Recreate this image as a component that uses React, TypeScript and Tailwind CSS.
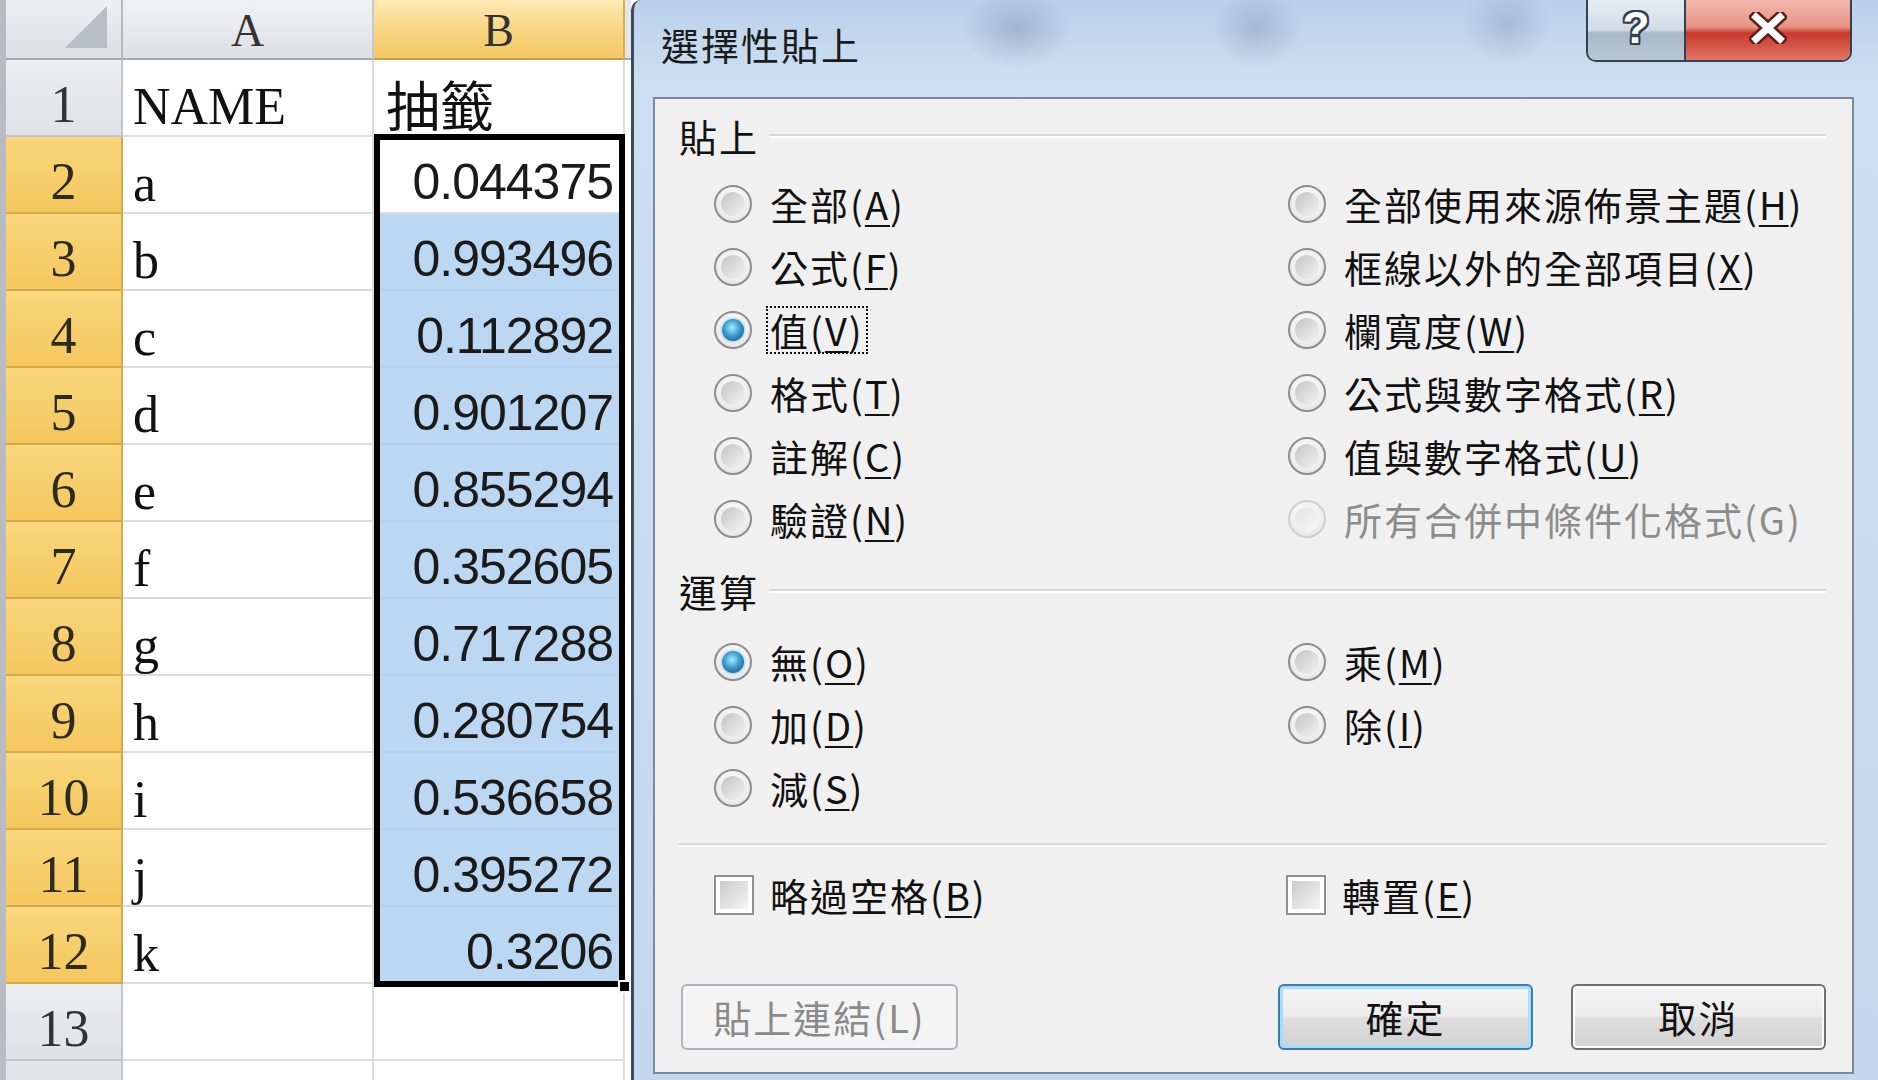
import React from "react";

const names = ["a", "b", "c", "d", "e", "f", "g", "h", "i", "j", "k"];
const values = [
  "0.044375",
  "0.993496",
  "0.112892",
  "0.901207",
  "0.855294",
  "0.352605",
  "0.717288",
  "0.280754",
  "0.536658",
  "0.395272",
  "0.3206",
];

const serif = "font-['Liberation_Serif','Noto_Sans_CJK_TC',serif]";
const cjk = "font-['Noto_Sans_CJK_TC',sans-serif]";

function RowHead({ n, active }: { n: number; active: boolean }) {
  return (
    <div
      className={`flex h-[77px] shrink-0 items-end justify-center border-r-2 border-b-2 pb-[4px] text-[52px] leading-none ${serif} ${
        active
          ? "border-[#d6a94a] bg-[linear-gradient(to_bottom,#f9d77c,#f4c75d)] text-[#2e2a20]"
          : "border-[#c3c7cd] bg-[linear-gradient(to_bottom,#eceef0,#dfe2e6)] text-[#333]"
      }`}
    >
      {n}
    </div>
  );
}

function Sheet() {
  return (
    <div className="flex h-[1080px] w-[631px] shrink-0 overflow-hidden border-l-[6px] border-[#b8bcc2] bg-white">
      {/* row headers */}
      <div className="flex w-[117px] shrink-0 flex-col">
        <div className="flex h-[60px] shrink-0 items-end justify-end border-r-2 border-b-2 border-r-[#b4b9c0] border-b-[#a4a9b0] bg-[linear-gradient(to_bottom,#eef0f2,#dcdfe3)] pr-[14px] pb-[10px]">
          <svg width="42" height="42" viewBox="0 0 42 42">
            <path d="M42 0 L42 42 L0 42 Z" fill="#b9bec5" />
          </svg>
        </div>
        <RowHead n={1} active={false} />
        {names.map((_, i) => (
          <RowHead key={i} n={i + 2} active={true} />
        ))}
        <RowHead n={13} active={false} />
        <div className="flex-1 border-r-2 border-[#c3c7cd] bg-[#e2e5e8]" />
      </div>

      {/* column A */}
      <div className="flex w-[251px] shrink-0 flex-col">
        <div className={`flex h-[60px] shrink-0 items-center justify-center border-r-2 border-b-2 border-r-[#c6cad0] border-b-[#a4a9b0] bg-[linear-gradient(to_bottom,#f1f2f4,#dde0e4)] pt-[4px] text-[46px] leading-none text-[#333] ${serif}`}>
          A
        </div>
        <div className={`flex h-[77px] shrink-0 items-end border-r-2 border-b-2 border-[#dadcdf] pb-[2px] pl-[10px] text-[52px] leading-none text-[#111] ${serif}`}>
          NAME
        </div>
        {names.map((n) => (
          <div
            key={n}
            className={`flex h-[77px] shrink-0 items-end border-r-2 border-b-2 border-[#dadcdf] pb-[2px] pl-[10px] text-[52px] leading-none text-[#111] ${serif}`}
          >
            {n}
          </div>
        ))}
        <div className="h-[77px] shrink-0 border-r-2 border-b-2 border-[#dadcdf]" />
        <div className="flex-1 border-r-2 border-[#dadcdf]" />
      </div>

      {/* column B */}
      <div className="flex w-[251px] shrink-0 flex-col">
        <div className={`flex h-[60px] shrink-0 items-center justify-center border-r-2 border-b-2 border-r-[#d9ad52] border-b-[#c9a048] bg-[linear-gradient(to_bottom,#fde9b4,#f9d889_45%,#f5c862)] pt-[4px] text-[46px] leading-none text-[#333] ${serif}`}>
          B
        </div>
        <div className={`flex h-[77px] shrink-0 items-end border-r-2 border-b-2 border-[#dadcdf] pb-[4px] pl-[12px] text-[54px] leading-none text-[#111] ${cjk}`}>
          抽籤
        </div>
        <div className="relative flex shrink-0 flex-col">
          {values.map((v, i) => (
            <div
              key={v}
              className={`flex h-[77px] shrink-0 items-end justify-end border-b-2 pr-[12px] pb-[5px] font-['Liberation_Sans',sans-serif] text-[50px] leading-none tracking-[-1px] text-[#1a1a1a] ${
                i === 0 ? "border-[#dadcdf] bg-white" : "border-[#b4d0ee] bg-[#bcd7f2]"
              }`}
            >
              {v}
            </div>
          ))}
          <div className="pointer-events-none absolute -top-[3px] -bottom-[3px] left-0 right-0 border-[6px] border-black" />
          <div className="pointer-events-none absolute -right-[6px] -bottom-[9px] h-[13px] w-[13px] border-2 border-white bg-black" />
        </div>
        <div className="h-[77px] shrink-0 border-r-2 border-b-2 border-[#dadcdf]" />
        <div className="flex-1 border-r-2 border-[#dadcdf]" />
      </div>

      {/* sliver of column C */}
      <div className="flex flex-1 flex-col">
        <div className="h-[60px] shrink-0 border-b-2 border-[#a4a9b0] bg-[#e4e6e9]" />
        <div className="flex-1 bg-white" />
      </div>
    </div>
  );
}

function Radio({ checked, disabled }: { checked?: boolean; disabled?: boolean }) {
  return (
    <span
      className={`flex h-[38px] w-[38px] shrink-0 items-center justify-center rounded-full border-2 bg-[radial-gradient(circle_at_50%_40%,#ffffff,#eeeeee_60%,#d8d8d8)] ${
        disabled ? "border-[#cfd0d1]" : "border-[#8d8e90]"
      }`}
    >
      {checked ? (
        <span className="h-[22px] w-[22px] rounded-full bg-[radial-gradient(circle_at_45%_40%,#a8ecff,#3a9ccf_45%,#0e4a6e)] shadow-[0_0_3px_#5aa8d8]" />
      ) : (
        <span
          className={`h-[24px] w-[24px] rounded-full ${
            disabled
              ? "bg-[linear-gradient(135deg,#e4e4e4,#f7f7f7)]"
              : "bg-[linear-gradient(135deg,#c4c4c4,#f3f3f3)]"
          }`}
        />
      )}
    </span>
  );
}

function Key({ k }: { k: string }) {
  return (
    <>
      (<span className="underline decoration-2 underline-offset-[5px]">{k}</span>)
    </>
  );
}

type Opt = { t: string; k: string; checked?: boolean; focus?: boolean; disabled?: boolean } | null;

function Option({ o }: { o: Opt }) {
  if (!o) return <div className="h-[63px]" />;
  return (
    <div className="flex h-[63px] items-center gap-[18px]">
      <Radio checked={o.checked} disabled={o.disabled} />
      <span
        className={`whitespace-nowrap ${o.disabled ? "text-[#8c8c8c]" : "text-[#111]"} ${
          o.focus ? "-ml-[4px] border-2 border-dotted border-[#111] px-[2px] py-[3px]" : ""
        }`}
      >
        {o.t}
        {o.disabled ? `(${o.k})` : <Key k={o.k} />}
      </span>
    </div>
  );
}

function GroupHead({ label }: { label: string }) {
  return (
    <div className="flex h-[44px] shrink-0 items-center">
      <span className="text-[#111]">{label}</span>
      <div className="ml-[10px] h-0 flex-1 border-t-2 border-b-2 border-t-[#d9d9d9] border-b-white" />
    </div>
  );
}

function Checkbox() {
  return (
    <span className="flex h-[40px] w-[40px] shrink-0 items-center justify-center border-2 border-[#8e8f8f] bg-white">
      <span className="h-[28px] w-[28px] bg-[linear-gradient(135deg,#cbcbcb,#f5f5f5)]" />
    </span>
  );
}

const pasteOpts: Opt[] = [
  { t: "全部", k: "A" },
  { t: "全部使用來源佈景主題", k: "H" },
  { t: "公式", k: "F" },
  { t: "框線以外的全部項目", k: "X" },
  { t: "值", k: "V", checked: true, focus: true },
  { t: "欄寬度", k: "W" },
  { t: "格式", k: "T" },
  { t: "公式與數字格式", k: "R" },
  { t: "註解", k: "C" },
  { t: "值與數字格式", k: "U" },
  { t: "驗證", k: "N" },
  { t: "所有合併中條件化格式", k: "G", disabled: true },
];

const opOpts: Opt[] = [
  { t: "無", k: "O", checked: true },
  { t: "乘", k: "M" },
  { t: "加", k: "D" },
  { t: "除", k: "I" },
  { t: "減", k: "S" },
  null,
];

const btnFace =
  "bg-[linear-gradient(to_bottom,#f4f4f4,#ececec_48%,#dedede_52%,#d2d2d2)]";

function Dialog() {
  return (
    <div
      className={`flex h-[1080px] flex-1 flex-col rounded-tl-[10px] border-l-[3px] border-[#3d4b5c] bg-[radial-gradient(ellipse_55px_40px_at_383px_28px,rgba(80,100,130,0.28),transparent),radial-gradient(ellipse_45px_40px_at_623px_28px,rgba(80,100,130,0.25),transparent),radial-gradient(ellipse_45px_40px_at_873px_24px,rgba(80,100,130,0.22),transparent),linear-gradient(to_bottom,#bad1ea,#cde0f3_85px,#c3d8ee)] pr-[24px] pb-[6px] pl-[19px] ${cjk} text-[38px] leading-none tracking-[2px]`}
    >
      <div className="flex h-[97px] shrink-0 items-start">
        <div className="pt-[25px] pl-[8px] text-[#1b1b1b]">選擇性貼上</div>
        <div className="mr-[2px] ml-auto flex h-[62px] overflow-hidden rounded-b-[10px] border-2 border-t-0 border-[#34404e]">
          <div className="flex w-[98px] items-center justify-center border-r-2 border-[#34404e] bg-[linear-gradient(to_bottom,#e6edf5,#d1dbe6_50%,#a9b8c8_55%,#b8c6d4)] pb-[4px] font-['Liberation_Sans',sans-serif] text-[44px] font-bold tracking-normal text-white [text-shadow:2px_0_0_#33414f,-2px_0_0_#33414f,0_2px_0_#33414f,0_-2px_0_#33414f,2px_2px_0_#33414f,-2px_-2px_0_#33414f,2px_-2px_0_#33414f,-2px_2px_0_#33414f]">
            ?
          </div>
          <div className="flex w-[164px] items-center justify-center bg-[linear-gradient(to_bottom,#f1b8ae,#e79486_45%,#c9392b_55%,#df7466)] pb-[4px]">
            <svg width="38" height="32" viewBox="0 0 38 32">
              <path d="M7 5 L31 27 M31 5 L7 27" stroke="#5a1f1a" strokeWidth="12" strokeLinecap="square" />
              <path d="M7 5 L31 27 M31 5 L7 27" stroke="#ffffff" strokeWidth="7" strokeLinecap="square" />
            </svg>
          </div>
        </div>
      </div>

      <div className="flex flex-1 flex-col overflow-hidden border-2 border-[#7b899a] bg-[#f0f0f0] pr-[26px] pl-[24px]">
        <div className="mt-[15px]">
          <GroupHead label="貼上" />
        </div>
        <div className="mt-[14px] grid grid-cols-[574px_1fr] pl-[35px]">
          {pasteOpts.map((o, i) => (
            <Option key={i} o={o} />
          ))}
        </div>
        <div className="mt-[19px]">
          <GroupHead label="運算" />
        </div>
        <div className="mt-[17px] grid grid-cols-[574px_1fr] pl-[35px]">
          {opOpts.map((o, i) => (
            <Option key={i} o={o} />
          ))}
        </div>
        <div className="mt-[24px] h-0 border-t-2 border-b-2 border-t-[#d9d9d9] border-b-white" />
        <div className="mt-[16px] grid grid-cols-[574px_1fr] pl-[35px]">
          <div className="flex h-[63px] items-center gap-[16px]">
            <Checkbox />
            <span className="text-[#111]">
              略過空格
              <Key k="B" />
            </span>
          </div>
          <div className="-ml-[2px] flex h-[63px] items-center gap-[16px]">
            <Checkbox />
            <span className="text-[#111]">
              轉置
              <Key k="E" />
            </span>
          </div>
        </div>
        <div className="mt-[58px] flex items-center pl-[2px]">
          <button className="flex h-[66px] w-[277px] items-center justify-center rounded-[6px] border-2 border-[#b0b4b8] bg-[#f4f4f4] text-[#8a8a8a]">
            貼上連結(L)
          </button>
          <button
            className={`ml-auto flex h-[66px] w-[255px] items-center justify-center rounded-[6px] border-2 border-[#3a7caf] ${btnFace} text-[#111] shadow-[inset_0_0_0_3px_#a6def6]`}
          >
            確定
          </button>
          <button
            className={`ml-[38px] flex h-[66px] w-[255px] items-center justify-center rounded-[6px] border-2 border-[#707070] ${btnFace} text-[#111] shadow-[inset_0_0_0_2px_#fbfbfb]`}
          >
            取消
          </button>
        </div>
      </div>
    </div>
  );
}

export default function App() {
  return (
    <div className="flex h-[1080px] w-[1878px] overflow-hidden bg-white">
      <Sheet />
      <Dialog />
    </div>
  );
}
